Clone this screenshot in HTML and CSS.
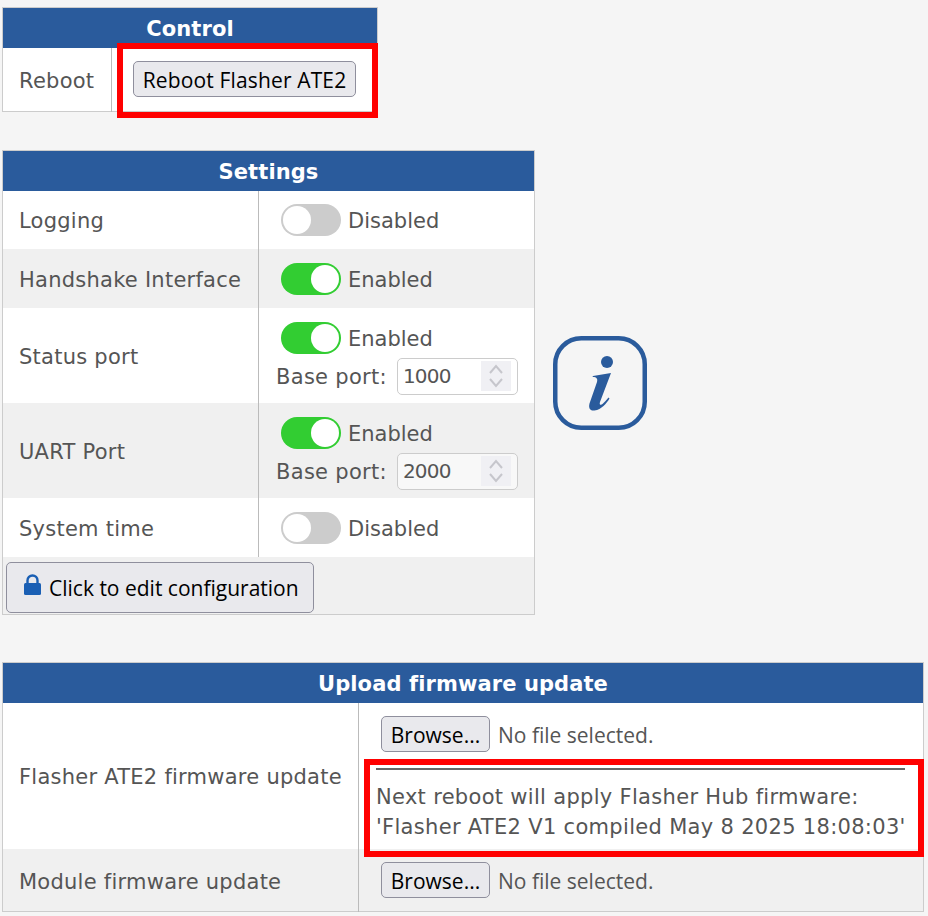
FILE: index.html
```html
<!DOCTYPE html>
<html lang="en">
<head>
    <meta charset="UTF-8">
    <meta name="viewport" content="width=device-width, initial-scale=1.0">
    <title>Flasher ATE2</title>
    <link rel="stylesheet" href="styles.css">
</head>
<body>
    <!-- Control -->
    <table class="panel control-panel">
        <colgroup><col class="control-col"><col></colgroup>
        <tr><th colspan="2">Control</th></tr>
        <tr>
            <td class="label-cell">Reboot</td>
            <td class="value-cell marked">
                <button class="btn reboot-btn" type="button">Reboot Flasher ATE2</button>
                <div class="red-box"></div>
            </td>
        </tr>
    </table>

    <!-- Settings -->
    <div class="settings-row">
        <table class="panel settings-panel">
            <colgroup><col class="settings-col"><col></colgroup>
            <tr><th colspan="2">Settings</th></tr>
            <tr class="row-short">
                <td class="label-cell">Logging</td>
                <td class="value-cell">
                    <div class="toggle-line"><span class="toggle"></span><span class="cell-text">Disabled</span></div>
                </td>
            </tr>
            <tr class="row-mid alt">
                <td class="label-cell">Handshake Interface</td>
                <td class="value-cell">
                    <div class="toggle-line"><span class="toggle on"></span><span class="cell-text">Enabled</span></div>
                </td>
            </tr>
            <tr class="row-tall">
                <td class="label-cell">Status port</td>
                <td class="value-cell">
                    <div class="toggle-line"><span class="toggle on"></span><span class="cell-text">Enabled</span></div>
                    <div class="port-line"><span class="cell-text port-text">Base port:</span>
                        <span class="num-input">
                            <span class="num-value">1000</span>
                            <span class="spinner">
                                <svg width="16" height="24" viewBox="0 0 16 24"><path d="M2 9l6-7 6 7M2 15l6 7 6-7" fill="none" stroke="#c6c6cc" stroke-width="2"/></svg>
                            </span>
                        </span>
                    </div>
                </td>
            </tr>
            <tr class="row-tall alt">
                <td class="label-cell">UART Port</td>
                <td class="value-cell">
                    <div class="toggle-line"><span class="toggle on"></span><span class="cell-text">Enabled</span></div>
                    <div class="port-line"><span class="cell-text port-text">Base port:</span>
                        <span class="num-input disabled">
                            <span class="num-value">2000</span>
                            <span class="spinner">
                                <svg width="16" height="24" viewBox="0 0 16 24"><path d="M2 9l6-7 6 7M2 15l6 7 6-7" fill="none" stroke="#c6c6cc" stroke-width="2"/></svg>
                            </span>
                        </span>
                    </div>
                </td>
            </tr>
            <tr class="row-mid">
                <td class="label-cell">System time</td>
                <td class="value-cell">
                    <div class="toggle-line"><span class="toggle"></span><span class="cell-text">Disabled</span></div>
                </td>
            </tr>
            <tr class="alt">
                <td class="footer-cell" colspan="2">
                    <button class="btn edit-btn" type="button">
                        <svg class="lock" width="17" height="21" viewBox="0 0 17 21"><path d="M3.500 10V6.500a5 5 0 0 1 10 0V10" fill="none" stroke="#1a5fb4" stroke-width="2.400"/><rect x="0" y="9" width="17" height="12" rx="1.500" fill="#1a5fb4"/></svg>
                        Click to edit configuration
                    </button>
                </td>
            </tr>
        </table>

        <svg class="info-icon" width="94" height="94" viewBox="0 0 94 94">
            <rect x="2.250" y="2.250" width="89.500" height="89.500" rx="26" fill="none" stroke="#2a5b9c" stroke-width="4.500"/>
            <circle cx="54" cy="26" r="6" fill="#2a5b9c"/>
            <path d="M40 40L58 37L47 66c-1 3 1 3.500 2.500 2c2-2 4-4 6-6.500l1 1c-3 5-8 11-15 12c-5 .5-6-3-5-7L44 46c.8-3 0-5-4.500-5z" fill="#2a5b9c"/>
        </svg>
    </div>

    <!-- Upload -->
    <table class="panel upload-panel">
        <colgroup><col class="upload-col"><col></colgroup>
        <tr><th colspan="2">Upload firmware update</th></tr>
        <tr>
            <td class="label-cell">Flasher ATE2 firmware update</td>
            <td class="value-cell marked upload-cell">
                <div class="file-line"><button class="btn file-btn" type="button">Browse...</button><span class="file-name">No file selected.</span></div>
                <hr class="divider">
                <p class="note">Next reboot will apply Flasher Hub firmware:<br>'Flasher ATE2 V1 compiled May 8 2025 18:08:03'</p>
                <div class="red-box"></div>
            </td>
        </tr>
        <tr class="alt">
            <td class="label-cell">Module firmware update</td>
            <td class="value-cell upload-cell">
                <div class="file-line"><button class="btn file-btn" type="button">Browse...</button><span class="file-name">No file selected.</span></div>
            </td>
        </tr>
    </table>
</body>
</html>
```

FILE: styles.css
```css
body {
    font-family: "DejaVu Sans", Verdana, sans-serif;
    font-size: 21px;
    background-color: #f5f5f5;
    color: #555;
    margin: 0;
    padding: 7px 0 0 2px;
    height: 909px;
    overflow: hidden;
}

.panel {
    border-collapse: collapse;
    table-layout: fixed;
    background-color: #fff;
    border: 1px solid #ccc;
}

.panel th {
    background-color: #2a5b9c;
    color: #fff;
    font-size: 21px;
    font-weight: bold;
    letter-spacing: 0.1px;
    height: 38px;
    padding: 2px 0 0;
}

.panel td {
    padding: 0;
}

.alt {
    background-color: #f0f0f0;
}

.row-short {
    height: 58px;
}

.row-mid {
    height: 59px;
}

.row-tall {
    height: 95px;
}

.panel .label-cell {
    padding: 3px 0 0 16px;
    letter-spacing: 0.25px;
    border-right: 1px solid #bbb;
}

.panel .value-cell {
    padding-left: 22px;
}

.row-mid .value-cell {
    padding-top: 1px;
}

.row-tall .value-cell {
    vertical-align: top;
    padding-top: 14px;
}

.marked {
    position: relative;
}

/* Red annotation frames drawn over the screenshot */
.red-box {
    position: absolute;
    border: 6px solid #f00;
    pointer-events: none;
}

.btn {
    font-family: "Open Sans", sans-serif;
    font-size: 21px;
    color: #000;
    background-color: #e9e9ed;
    border: 1px solid #8f8f9d;
    border-radius: 5px;
    padding: 2px 0 0;
}

/* Control */
.control-panel {
    width: 376px;
}

.control-col {
    width: 109px;
}

.control-panel tr:last-child {
    height: 63px;
}

.control-panel .value-cell {
    padding-left: 21px;
}

.reboot-btn {
    width: 223px;
    height: 36px;
    letter-spacing: 0.15px;
}

.control-panel .red-box {
    top: -5px;
    left: 5px;
    width: 249px;
    height: 63px;
}

/* Settings */
.settings-row {
    display: flex;
    align-items: center;
    gap: 18px;
    margin-top: 38px;
}

.settings-panel {
    width: 533px;
}

.settings-col {
    width: 256px;
}

.info-icon {
    margin-top: 1px;
}

.toggle-line {
    display: flex;
    align-items: center;
    gap: 7px;
}

.cell-text {
    padding-top: 2px;
}

.toggle {
    width: 60px;
    height: 32px;
    border-radius: 16px;
    background-color: #ccc;
    position: relative;
}

.toggle::after {
    content: "";
    position: absolute;
    top: 2px;
    left: 2px;
    width: 28px;
    height: 28px;
    border-radius: 50%;
    background-color: #fff;
}

.toggle.on {
    background-color: #32cd32;
}

.toggle.on::after {
    left: 30px;
}

.port-line {
    display: flex;
    align-items: center;
    gap: 10px;
    margin: 4px 0 0 -5px;
}

.port-text {
    letter-spacing: 0.3px;
}

.num-input {
    display: flex;
    align-items: center;
    justify-content: space-between;
    width: 121px;
    height: 37px;
    box-sizing: border-box;
    padding: 0 6px 0 5px;
    font-size: 20px;
    letter-spacing: -0.8px;
    background-color: #fff;
    border: 1px solid #ccc;
    border-radius: 5px;
}

.num-input.disabled {
    background-color: #f8f8f8;
}

.spinner {
    display: flex;
    align-items: center;
    justify-content: center;
    width: 30px;
    height: 30px;
    background-color: #f0f0f4;
}

.panel .footer-cell {
    height: 56px;
    padding: 0 0 1px 3px;
    vertical-align: bottom;
}

.edit-btn {
    display: flex;
    align-items: center;
    gap: 8px;
    width: 308px;
    height: 51px;
    padding-left: 17px;
}

.lock {
    margin-bottom: 8px;
}

/* Upload */
.upload-panel {
    width: 922px;
    margin-top: 47px;
}

.upload-col {
    width: 356px;
}

.file-line {
    display: flex;
    align-items: center;
    gap: 8px;
}

.file-name {
    font-family: "Open Sans", sans-serif;
    padding-top: 2px;
}

.file-btn {
    width: 109px;
    height: 36px;
}

.panel .upload-cell {
    padding-top: 13px;
    padding-bottom: 13px;
}

.panel .marked {
    padding-bottom: 0;
}

.upload-panel .alt .label-cell {
    padding-top: 5px;
}

.divider {
    margin: 16px 18px 0 -5px;
    border: 0;
    border-top: 2px solid #666;
}

.note {
    margin: 12px 0 7px -5px;
    line-height: 30px;
    letter-spacing: 0.31px;
    white-space: nowrap;
}

.upload-panel .red-box {
    top: 56px;
    left: 5px;
    width: 548px;
    height: 86px;
}
```
